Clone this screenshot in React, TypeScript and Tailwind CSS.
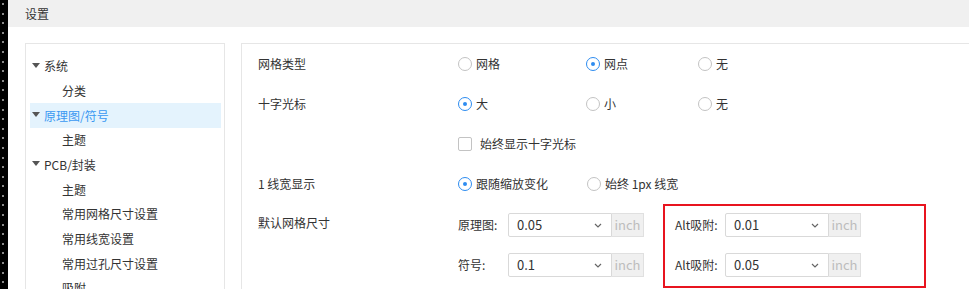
import React from "react";

const TREE = [
  { label: "系统", level: 0 },
  { label: "分类", level: 1 },
  { label: "原理图/符号", level: 0, active: true },
  { label: "主题", level: 1 },
  { label: "PCB/封装", level: 0 },
  { label: "主题", level: 1 },
  { label: "常用网格尺寸设置", level: 1 },
  { label: "常用线宽设置", level: 1 },
  { label: "常用过孔尺寸设置", level: 1 },
  { label: "吸附", level: 1 },
];

function Radio({ checked, label }: { checked?: boolean; label: string }) {
  return (
    <div className="flex items-center gap-[4px]">
      <span
        className={`w-[14px] h-[14px] rounded-full border flex items-center justify-center ${
          checked ? "border-[#2d8cf0]" : "border-[#c3c3c3]"
        }`}
      >
        {checked && <span className="w-[4px] h-[4px] rounded-full bg-[#2d8cf0]" />}
      </span>
      <span>{label}</span>
    </div>
  );
}

function Chevron() {
  return (
    <svg width="8" height="5" viewBox="0 0 8 5" fill="none">
      <path d="M1 1l3 3 3-3" stroke="#666" strokeWidth="1.2" />
    </svg>
  );
}

function SizeField({ label, value }: { label: string; value: string }) {
  return (
    <div className="flex items-center h-[24px]">
      <span className="w-[50px]">{label}</span>
      <div className="w-[104px] h-[24px] border border-[#d9d9d9] rounded-l-[2px] flex items-center justify-between pl-[8px] pr-[9px] text-[13px]">
        <span>{value}</span>
        <Chevron />
      </div>
      <div className="w-[32px] h-[24px] bg-[#f0f0f0] border border-l-0 border-[#e0e0e0] flex items-center justify-center text-[#bdbdbd] text-[13px]">
        inch
      </div>
    </div>
  );
}

export default function App() {
  return (
    <div className="w-[969px] h-[289px] overflow-hidden flex bg-white text-[12px] text-[#333] font-['Noto_Sans_CJK_SC',sans-serif]">
      {/* dotted black edge */}
      <div className="w-[8px] bg-black flex flex-col items-start pl-[2px] pt-[3px] gap-[7.6px] shrink-0">
        {Array.from({ length: 30 }).map((_, i) => (
          <span key={i} className="w-[2px] h-[2px] bg-[#8a8a8a]" />
        ))}
      </div>

      <div className="flex-1 flex flex-col">
        <div className="h-[27px] bg-[#f0f0f0] flex items-center pl-[17px] shrink-0">设置</div>

        <div className="flex-1 flex pt-[16px] pl-[17px] gap-[16px]">
          {/* tree */}
          <div className="w-[200px] border border-b-0 border-[#e6e6e6] pt-[10px] pl-[4px] pr-[3px] shrink-0">
            {TREE.map((item, i) => (
              <div
                key={i}
                className={`h-[24.67px] flex items-center ${item.active ? "bg-[#e4f3fd] text-[#3a98f2]" : ""} ${
                  item.level === 0 ? "pl-[2px]" : "pl-[32px]"
                }`}
              >
                {item.level === 0 && (
                  <svg width="8" height="5" viewBox="0 0 8 5" className="mr-[4px] mt-[-2px]">
                    <path d="M0 0h8L4 5z" fill="#555" />
                  </svg>
                )}
                <span>{item.label}</span>
              </div>
            ))}
          </div>

          {/* settings */}
          <div className="flex-1 border-l border-t border-[#e6e6e6] pl-[16px]">
            <div className="flex items-center h-[40px]">
              <span className="w-[200px]">网格类型</span>
              <div className="w-[128px]"><Radio label="网格" /></div>
              <div className="w-[112px]"><Radio checked label="网点" /></div>
              <Radio label="无" />
            </div>
            <div className="flex items-center h-[39px]">
              <span className="w-[200px]">十字光标</span>
              <div className="w-[128px]"><Radio checked label="大" /></div>
              <div className="w-[112px]"><Radio label="小" /></div>
              <Radio label="无" />
            </div>
            <div className="flex items-center h-[41px]">
              <span className="w-[200px]" />
              <div className="flex items-center gap-[8px]">
                <span className="w-[14px] h-[14px] border border-[#c3c3c3] rounded-[2px]" />
                <span>始终显示十字光标</span>
              </div>
            </div>
            <div className="flex items-center h-[40px]">
              <span className="w-[200px]">1 线宽显示</span>
              <div className="w-[129px]"><Radio checked label="跟随缩放变化" /></div>
              <Radio label="始终 1px 线宽" />
            </div>
            <div className="flex items-start">
              <span className="w-[200px] pt-[10px]">默认网格尺寸</span>
              <div className="flex flex-col gap-[16px] pt-[9px]">
                <SizeField label="原理图:" value="0.05" />
                <SizeField label="符号:" value="0.1" />
              </div>
              <div className="ml-[19px] w-[263px] border-2 border-[#e8141f] pl-[10px] pt-[7px] pb-[9px] flex flex-col gap-[16px]">
                <SizeField label="Alt吸附:" value="0.01" />
                <SizeField label="Alt吸附:" value="0.05" />
              </div>
            </div>
          </div>
        </div>
      </div>
    </div>
  );
}
